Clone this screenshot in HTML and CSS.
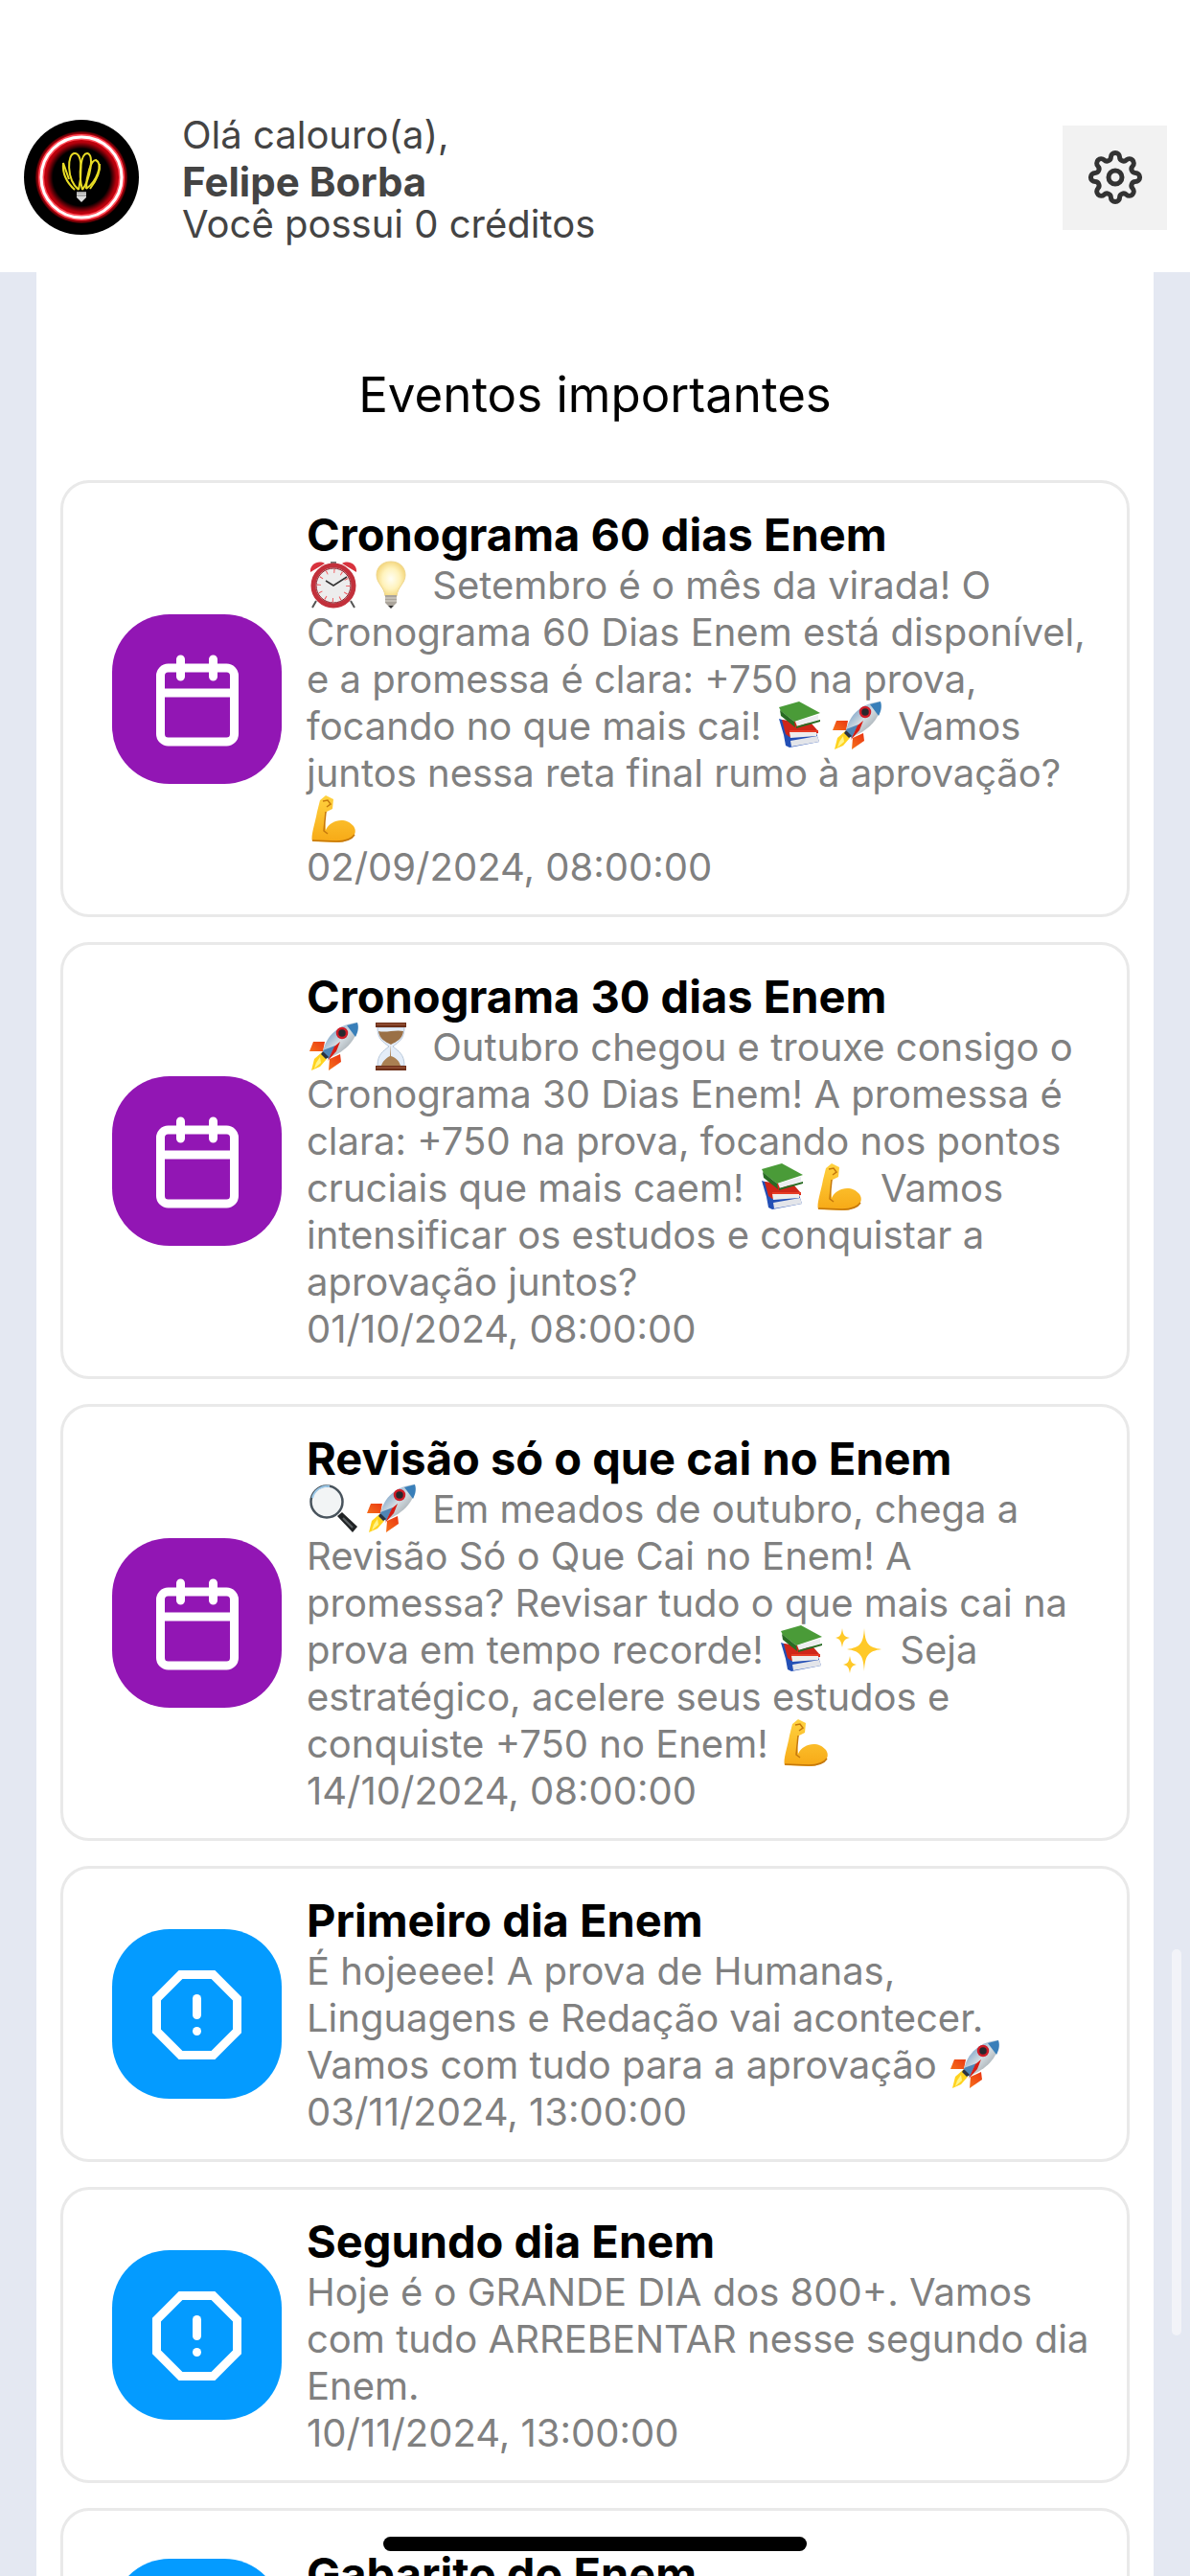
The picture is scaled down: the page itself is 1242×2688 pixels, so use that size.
FILE: index.html
```
<!DOCTYPE html>
<html lang="pt-BR">
<head>
    <meta charset="UTF-8">
    <meta name="viewport" content="width=device-width, initial-scale=1.0">
    <title>Eventos importantes</title>
    <link rel="stylesheet" href="styles.css">
</head>
<body>
    <svg class="sprites" aria-hidden="true">
        <defs>
            <linearGradient id="g-arm" x1="0" y1="0" x2="0" y2="1">
                <stop offset="0" stop-color="#ffd23f"/>
                <stop offset="1" stop-color="#f7a916"/>
            </linearGradient>
            <linearGradient id="g-body" x1="0" y1="0" x2="1" y2="1">
                <stop offset="0" stop-color="#3d7cb8"/>
                <stop offset="0.5" stop-color="#d5dde2"/>
                <stop offset="1" stop-color="#7d868c"/>
            </linearGradient>
            <linearGradient id="g-fire" x1="1" y1="0" x2="0" y2="1">
                <stop offset="0" stop-color="#e3170f"/>
                <stop offset="1" stop-color="#ff9a1f"/>
            </linearGradient>
            <radialGradient id="g-bulb">
                <stop offset="0" stop-color="#fffef4"/>
                <stop offset="0.6" stop-color="#fff3bd"/>
                <stop offset="1" stop-color="#f5d983"/>
            </radialGradient>
            <radialGradient id="g-glow">
                <stop offset="0.62" stop-color="#000"/>
                <stop offset="0.76" stop-color="#b3000c"/>
                <stop offset="0.92" stop-color="#e0000f"/>
                <stop offset="1" stop-color="#3a0003"/>
            </radialGradient>
        </defs>
        <symbol id="calendar" viewBox="0 0 177 177">
            <g fill="none" stroke="#fff" stroke-width="9" stroke-linecap="round">
                <rect x="50.5" y="56" width="77" height="77" rx="8"/>
                <path d="M51 82H127M71.500 47V65M105.500 47V65"/>
            </g>
        </symbol>
        <symbol id="alert" viewBox="0 0 177 177">
            <path fill="none" stroke="#fff" stroke-width="9" d="M71.500 47.500H105.500L130.500 72.500V106.500L105.500 131.500H71.500L46.500 106.500V72.500Z"/>
            <path stroke="#fff" stroke-width="9" stroke-linecap="round" d="M88.500 72.500V89.500"/>
            <circle cx="88.5" cy="106.500" r="4.5" fill="#fff"/>
        </symbol>
        <symbol id="clock" viewBox="0 0 60 50">
            <path d="M10 42L6 49M46 42L50 49" stroke="#555" stroke-width="2"/>
            <path d="M4 12C3 4 12-1 19 3ZM52 12C53 4 44-1 37 3Z" fill="#d8323d"/>
            <path d="M25 1H31V4H25Z" fill="#777"/>
            <circle cx="28" cy="26" r="21" fill="#ededed" stroke="#c2303b" stroke-width="5"/>
            <circle cx="28" cy="26" r="18" fill="none" stroke="#8d1d27" stroke-width="1"/>
            <circle cx="28" cy="26" r="15" fill="none" stroke="#f0575d" stroke-width="4" stroke-dasharray="1 6.850"/>
            <path d="M20 21L28 26L42 17" fill="none" stroke="#333" stroke-width="1.500"/>
        </symbol>
        <symbol id="bulb" viewBox="0 0 60 50">
            <path d="M28 1C19 1 13 7 13 15C13 24 21 27 22 37H34C35 27 43 24 43 15C43 7 37 1 28 1Z" fill="url(#g-bulb)" stroke="#efd68c"/>
            <path d="M22 36H34V44L31 47H25L22 44Z" fill="#aaa49b"/>
            <path d="M22 39H34M22 42H34" stroke="#dedad2"/>
            <path d="M25 47H31L28 50Z" fill="#333"/>
        </symbol>
        <symbol id="books" viewBox="0 0 60 50">
            <path d="M7 18L12 35L14 46L18 48L49 42L46 33L30 25Z" fill="#234fb5"/>
            <path d="M19 41L47 36L49 42L20 47Z" fill="#e3e5ea"/>
            <path d="M10 19L41 23L48 31V33L18 37L14 34Z" fill="#cf2619"/>
            <path d="M18 32L46 31V36L19 38Z" fill="#eee"/>
            <path d="M18 30L48 30V32H18Z" fill="#e63b25"/>
            <path d="M7 6L28 0L50 12L23 21L9 10Z" fill="#4a9b38"/>
            <path d="M8 9L23 21L24 27L9 15Z" fill="#286b23"/>
            <path d="M24 21L48 14V19L26 26Z" fill="#eceef0"/>
            <path d="M25 26L50 19V21L25 28Z" fill="#286b23"/>
        </symbol>
        <symbol id="rocket" viewBox="0 0 60 50">
            <path d="M19 20L7 20L3 30L17 30ZM35 33L36 41L23 50L24 38Z" fill="url(#g-fire)"/>
            <path d="M16 31L8 38L5 50L14 46L21 38Z" fill="#ffd31f"/>
            <path d="M14 36L10 42L8 48L15 42Z" fill="#fff48a"/>
            <path d="M17 31C20 13 35 1 53 0C55 15 42 30 23 37Z" fill="url(#g-body)"/>
            <path d="M42 3L53 0C55 6 53 11 51 15Z" fill="#397fb9"/>
            <path d="M17 29L30 24L23 38L20 36Z" fill="#4f85b5"/>
            <path d="M17 30L23 36L20 38L15 33Z" fill="#293241"/>
            <path d="M29 25L35 20L31 30L22 40Z" fill="#d61d14"/>
            <circle cx="37" cy="11" r="5" fill="#26282d" stroke="#cf1d28" stroke-width="2.500"/>
        </symbol>
        <symbol id="arm" viewBox="0 0 60 50">
            <path d="M14 5L20 0L28 4L27 14L21 17C17 23 20 29 20 36C25 25 41 22 49 32C55 41 45 49 31 49L6 48C4 42 9 29 11 17Z" fill="url(#g-arm)"/>
            <path d="M20 17L18 37L22 40M17 6L22 5L25 9L21 12M6 47L31 48C40 48 47 46 50 41" fill="none" stroke="#c5780c" stroke-width="1.500"/>
        </symbol>
        <symbol id="hourglass" viewBox="0 0 60 50">
            <path d="M14 5H42C42 18 36 20 30 25C36 30 42 33 42 45H14C14 33 20 30 26 25C20 20 14 18 14 5Z" fill="#e4edf8" stroke="#b8c8db"/>
            <path d="M15 9C23 11 33 7 41 9C40 17 34 20 28 23C22 20 16 17 15 9Z" fill="#9a7046"/>
            <path d="M28 23V35C34 37 37 41 38 45H18C19 41 23 37 27 35Z" fill="#aa8052"/>
            <path d="M12 0H44V5H12ZM12 45H44V50H12Z" fill="#6d3019"/>
            <path d="M13 2H43M13 47H43" stroke="#ab6547"/>
        </symbol>
        <symbol id="magnifier" viewBox="0 0 60 50">
            <path d="M32 33L37 29L53 44L48 50Z" fill="#202325"/>
            <path d="M38 35L48 45" stroke="#5d6265" stroke-width="2"/>
            <circle cx="21" cy="18" r="16.500" fill="#f2f4f5" stroke="#49545d" stroke-width="2.500"/>
            <path d="M6 14A16 16 0 0 1 24 2" fill="none" stroke="#9cc9e9" stroke-width="2"/>
        </symbol>
        <symbol id="sparkles" viewBox="0 0 60 50">
            <path d="M34 3C35 19 38 23 52 25C38 27 35 31 34 48C33 31 30 27 16 25C30 23 33 19 34 3Z" fill="#ffc928"/>
            <path d="M11 3C12 10 13 12 19 13C13 14 12 17 11 23C10 17 9 14 4 13C9 12 10 10 11 3ZM19 32C20 38 21 40 26 41C21 42 20 44 19 50C18 44 17 42 12 41C17 40 18 38 19 32Z" fill="#ffc928"/>
        </symbol>
    </svg>

    <header class="topbar">
        <svg class="avatar" viewBox="0 0 120 120" role="img" aria-label="Foto de perfil">
            <circle cx="60" cy="60" r="60" fill="#000"/>
            <circle cx="60" cy="60" r="48" fill="url(#g-glow)"/>
            <circle cx="60" cy="60" r="42" fill="none" stroke="#ff4c58" stroke-width="6"/>
            <circle cx="60" cy="60" r="42" fill="none" stroke="#fff" stroke-width="3"/>
            <g fill="none" stroke="#e8dc25" stroke-width="2">
                <path d="M57 73C44 62 45 35 53 35C62 35 60 61 57 73"/>
                <path d="M61 73C56 55 60 35 66 35C74 36 69 62 61 73"/>
                <path d="M65 72C65 58 70 42 75 42C83 46 76 64 65 72"/>
                <path d="M69 72C75 64 80 55 79 46M53 73C43 64 40 55 41 45L47 62"/>
            </g>
            <path d="M55 75H65V81L60 86L55 81Z" fill="#ddd"/>
            <path d="M55 76H65M55 79H65" stroke="#777"/>
        </svg>
        <div class="greeting">
            <p>Olá calouro(a),</p>
            <p class="name">Felipe Borba</p>
            <p class="credits">Você possui 0 créditos</p>
        </div>
        <button class="settings" type="button" aria-label="Configurações">
            <svg viewBox="-30 -30 60 60" fill="none" stroke="#333" stroke-width="5">
                <path d="M-4.600-21A4.600 4.600 0 0 1 4.600-21A4.100 4.100 0 0 0 11.600-18.100A4.600 4.600 0 0 1 18.100-11.600A4.100 4.100 0 0 0 21-4.600A4.600 4.600 0 0 1 21 4.600A4.100 4.100 0 0 0 18.100 11.600A4.600 4.600 0 0 1 11.600 18.100A4.100 4.100 0 0 0 4.600 21A4.600 4.600 0 0 1-4.600 21A4.100 4.100 0 0 0-11.600 18.100A4.600 4.600 0 0 1-18.100 11.600A4.100 4.100 0 0 0-21 4.600A4.600 4.600 0 0 1-21-4.600A4.100 4.100 0 0 0-18.100-11.600A4.600 4.600 0 0 1-11.600-18.100A4.100 4.100 0 0 0-4.600-21Z"/>
                <circle r="7"/>
            </svg>
        </button>
    </header>

    <main class="panel">
        <h1>Eventos importantes</h1>

        <div class="events">
            <article class="event">
                <svg class="event-icon schedule" aria-hidden="true"><use href="#calendar"/></svg>
                <div class="event-text">
                    <h2>Cronograma 60 dias Enem</h2>
                    <p><svg class="emoji" role="img" aria-label="⏰"><use href="#clock"/></svg><svg class="emoji" role="img" aria-label="💡"><use href="#bulb"/></svg> Setembro é o mês da virada! O Cronograma 60 Dias Enem está disponível, e a promessa é clara: +750 na prova, focando no que mais cai! <svg class="emoji" role="img" aria-label="📚"><use href="#books"/></svg><svg class="emoji" role="img" aria-label="🚀"><use href="#rocket"/></svg> Vamos juntos nessa reta final rumo à aprovação? <svg class="emoji" role="img" aria-label="💪"><use href="#arm"/></svg></p>
                    <time datetime="2024-09-02T08:00:00">02/09/2024, 08:00:00</time>
                </div>
            </article>

            <article class="event">
                <svg class="event-icon schedule" aria-hidden="true"><use href="#calendar"/></svg>
                <div class="event-text">
                    <h2>Cronograma 30 dias Enem</h2>
                    <p><svg class="emoji" role="img" aria-label="🚀"><use href="#rocket"/></svg><svg class="emoji" role="img" aria-label="⏳"><use href="#hourglass"/></svg> Outubro chegou e trouxe consigo o Cronograma 30 Dias Enem! A promessa é clara: +750 na prova, focando nos pontos cruciais que mais caem! <svg class="emoji" role="img" aria-label="📚"><use href="#books"/></svg><svg class="emoji" role="img" aria-label="💪"><use href="#arm"/></svg> Vamos intensificar os estudos e conquistar a aprovação juntos?</p>
                    <time datetime="2024-10-01T08:00:00">01/10/2024, 08:00:00</time>
                </div>
            </article>

            <article class="event">
                <svg class="event-icon schedule" aria-hidden="true"><use href="#calendar"/></svg>
                <div class="event-text">
                    <h2>Revisão só o que cai no Enem</h2>
                    <p><svg class="emoji" role="img" aria-label="🔍"><use href="#magnifier"/></svg><svg class="emoji" role="img" aria-label="🚀"><use href="#rocket"/></svg> Em meados de outubro, chega a Revisão Só o Que Cai no Enem! A promessa? Revisar tudo o que mais cai na prova em tempo recorde! <svg class="emoji" role="img" aria-label="📚"><use href="#books"/></svg><svg class="emoji" role="img" aria-label="✨"><use href="#sparkles"/></svg> Seja estratégico, acelere seus estudos e conquiste +750 no Enem! <svg class="emoji" role="img" aria-label="💪"><use href="#arm"/></svg></p>
                    <time datetime="2024-10-14T08:00:00">14/10/2024, 08:00:00</time>
                </div>
            </article>

            <article class="event">
                <svg class="event-icon exam" aria-hidden="true"><use href="#alert"/></svg>
                <div class="event-text">
                    <h2>Primeiro dia Enem</h2>
                    <p>É hojeeee! A prova de Humanas, Linguagens e Redação vai acontecer. Vamos com tudo para a aprovação <svg class="emoji" role="img" aria-label="🚀"><use href="#rocket"/></svg></p>
                    <time datetime="2024-11-03T13:00:00">03/11/2024, 13:00:00</time>
                </div>
            </article>

            <article class="event">
                <svg class="event-icon exam" aria-hidden="true"><use href="#alert"/></svg>
                <div class="event-text">
                    <h2>Segundo dia Enem</h2>
                    <p>Hoje é o GRANDE DIA dos 800+. Vamos com tudo ARREBENTAR nesse segundo dia Enem.</p>
                    <time datetime="2024-11-10T13:00:00">10/11/2024, 13:00:00</time>
                </div>
            </article>

            <article class="event">
                <svg class="event-icon exam" aria-hidden="true"><use href="#alert"/></svg>
                <div class="event-text">
                    <h2>Gabarito do Enem</h2>
                    <p>Confira o gabarito oficial do Enem e veja como foi o seu desempenho.</p>
                    <time datetime="2024-11-20T13:00:00">20/11/2024, 13:00:00</time>
                </div>
            </article>
        </div>
    </main>

    <div class="scroll-thumb"></div>
    <div class="home-indicator"></div>
</body>
</html>
```
FILE: styles.css
```
* {
    box-sizing: border-box;
}

body {
    font-family: Inter, "Liberation Sans", sans-serif;
    font-size: 40px;
    line-height: 49px;
    background-color: #e4e8f2;
    color: #000;
    margin: 0;
    height: 100vh;
    overflow: hidden;
    display: flex;
    flex-direction: column;
}

h1,
h2,
p {
    margin: 0;
}

.sprites {
    position: absolute;
    width: 0;
    height: 0;
}

.topbar {
    flex-shrink: 0;
    display: flex;
    align-items: center;
    gap: 45px;
    padding: 116px 24px 30px 25px;
    background-color: #fff;
    color: #444;
}

.avatar {
    width: 120px;
    height: 120px;
}

.greeting {
    flex: 1;
}

.greeting .name {
    font-size: 42px;
    font-weight: 700;
}

.greeting .credits {
    line-height: 40px;
}

.settings {
    display: flex;
    align-items: center;
    justify-content: center;
    width: 109px;
    height: 109px;
    padding: 0;
    border: none;
    background-color: #f2f2f2;
    cursor: pointer;
}

.settings svg {
    width: 60px;
    height: 60px;
}

.panel {
    flex: 1;
    min-height: 0;
    overflow: hidden;
    margin: 0 38px;
    padding: 97px 25px 0;
    background-color: #fff;
}

h1 {
    font-size: 51px;
    font-weight: 400;
    line-height: 62px;
    text-align: center;
    margin-bottom: 58px;
}

.events {
    display: flex;
    flex-direction: column;
    gap: 26px;
}

.event {
    display: flex;
    align-items: center;
    border: 3px solid #e9e9e9;
    border-radius: 30px;
}

.event-icon {
    flex-shrink: 0;
    width: 177px;
    height: 177px;
    margin: 50px 26px 50px 51px;
    border-radius: 60px;
}

.event-icon.schedule {
    background-color: #9216b4;
}

.event-icon.exam {
    background-color: #049bff;
}

.event-text {
    flex: 1;
    padding: 25px 26px 25px 0;
    color: #808080;
}

.event-text h2 {
    font-size: 47px;
    font-weight: 700;
    line-height: 57px;
    color: #000;
}

.event-text time {
    display: block;
}

.emoji {
    width: 60px;
    height: 50px;
    margin: -4px 0;
    vertical-align: -6px;
}

.scroll-thumb {
    position: fixed;
    right: 9px;
    bottom: 251px;
    width: 10px;
    height: 403px;
    border-radius: 5px;
    background-color: #f2f3f8;
}

.home-indicator {
    position: fixed;
    left: 50%;
    bottom: 26px;
    width: 442px;
    height: 15px;
    margin-left: -221px;
    border-radius: 8px;
    background-color: #000;
}
```
